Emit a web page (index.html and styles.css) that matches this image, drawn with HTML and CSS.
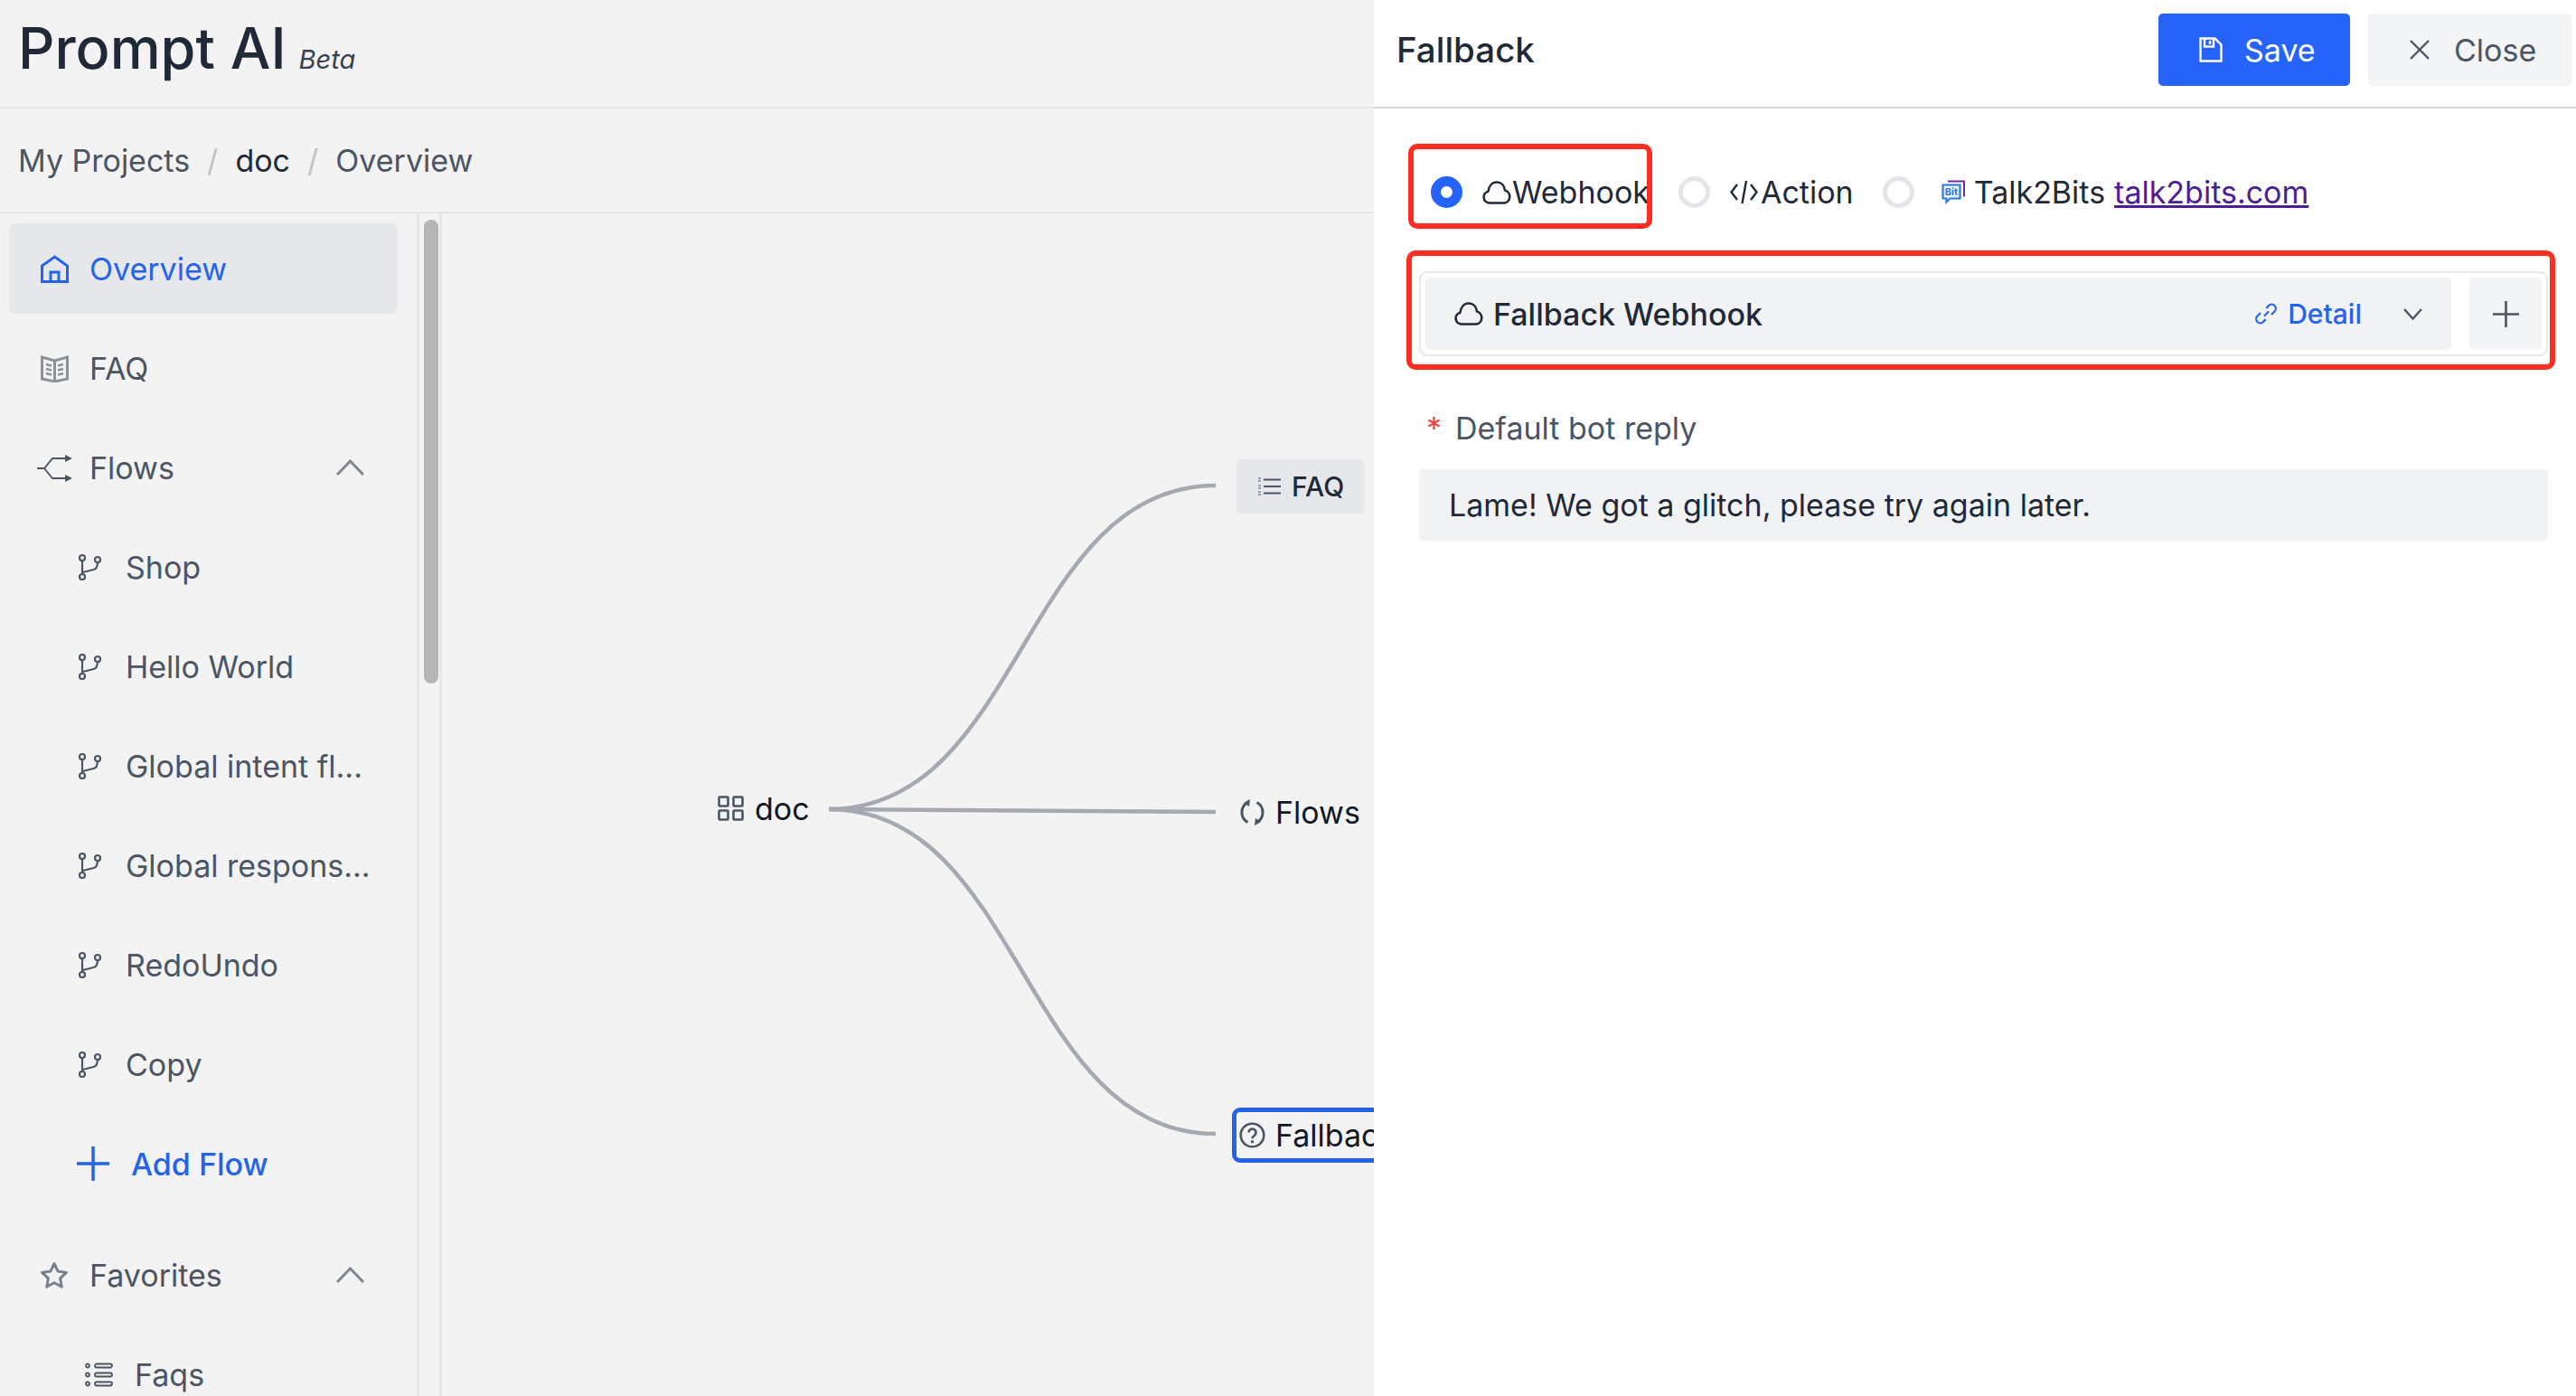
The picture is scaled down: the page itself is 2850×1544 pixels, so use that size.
FILE: index.html
```html
<!DOCTYPE html>
<html lang="en">
<head>
  <meta charset="UTF-8" />
  <title>Prompt AI</title>
  <link rel="stylesheet" href="styles.css">
</head>
<body>
  <svg class="icon-defs" width="0" height="0">
    <symbol id="i-branch" viewBox="0 0 25 29">
      <g fill="none" stroke="currentColor" stroke-width="2.2">
        <circle cx="4" cy="4" r="3" />
        <circle cx="4" cy="25" r="3" />
        <circle cx="21" cy="6" r="3" />
        <path d="M4 7v15M4.500 20l12-3c3-1 4-2 4.500-8" />
      </g>
    </symbol>
    <symbol id="i-chevron-up" viewBox="0 0 31 18">
      <path d="M1 17L15.500 2 30 17" fill="none" stroke="currentColor" stroke-width="3" />
    </symbol>
    <symbol id="i-cloud" viewBox="0 0 32 26">
      <path d="M8 24.500a6.500 6.500 0 0 1-1.500-12.800C7.200 5.500 11 1.500 16 1.500s8.500 3.800 9 9a7.200 7.200 0 0 1-.5 14z" fill="none" stroke="currentColor" stroke-width="2.600" stroke-linejoin="round" />
    </symbol>
  </svg>

  <div class="app">
    <div class="main">
      <header class="top-bar">
        <span class="logo">Prompt AI</span>
        <span class="beta">Beta</span>
      </header>
      <nav class="crumbs">
        <span>My Projects</span>
        <span class="crumb-sep">/</span>
        <span class="crumb-dark">doc</span>
        <span class="crumb-sep">/</span>
        <span>Overview</span>
      </nav>

      <div class="content">
        <aside class="sidebar">
          <ul class="nav">
            <li class="nav-item active">
              <span class="slot">
                <svg class="ic-home" viewBox="0 0 31 31"><path d="M1.500 29.500V12L15.500 2l14 10v17.500zM11 29.500V19h9v10.500" fill="none" stroke="currentColor" stroke-width="3" /></svg>
              </span>
              Overview
            </li>
            <li class="nav-item">
              <span class="slot">
                <svg class="ic-book" viewBox="0 0 31 31"><path d="M1.500 3l14 4 14-4v24l-14 3-14-3zM15.500 7v23" fill="none" stroke="#8b929c" stroke-width="3" /><path d="M6 11l6 1.500M6 16l6 1.500M6 21l6 1.500M25 11l-6 1.500M25 16l-6 1.500M25 21l-6 1.500" stroke="#8b929c" stroke-width="2.500" /></svg>
              </span>
              FAQ
            </li>
            <li class="nav-item">
              <span class="slot">
                <svg class="ic-flows" viewBox="0 0 39 31"><path d="M0 16h8L17 5h15M8 16l9 11h15" fill="none" stroke="currentColor" stroke-width="1.800" /><path d="M31 1l8 4-8 4zM31 23l8 4-8 4z" fill="currentColor" /></svg>
              </span>
              Flows
              <svg class="chevron"><use href="#i-chevron-up" /></svg>
            </li>
            <li class="nav-item sub"><svg class="ic-branch"><use href="#i-branch" /></svg>Shop</li>
            <li class="nav-item sub"><svg class="ic-branch"><use href="#i-branch" /></svg>Hello World</li>
            <li class="nav-item sub"><svg class="ic-branch"><use href="#i-branch" /></svg>Global intent fl...</li>
            <li class="nav-item sub"><svg class="ic-branch"><use href="#i-branch" /></svg>Global respons...</li>
            <li class="nav-item sub"><svg class="ic-branch"><use href="#i-branch" /></svg>RedoUndo</li>
            <li class="nav-item sub"><svg class="ic-branch"><use href="#i-branch" /></svg>Copy</li>
            <li class="nav-item add-flow">
              <svg class="ic-plus" viewBox="0 0 36 38"><path d="M18 0v38M0 19h36" stroke="currentColor" stroke-width="3.500" /></svg>
              Add Flow
            </li>
            <li class="nav-item favorites">
              <span class="slot">
                <svg class="ic-star" viewBox="0 0 32 31"><path d="M16 2.500l4.100 8.600 9.400 1.300-6.900 6.500 1.700 9.400L16 23.800l-8.300 4.500 1.700-9.400-6.900-6.500 9.400-1.300z" fill="none" stroke="#79818c" stroke-width="3" stroke-linejoin="round" /></svg>
              </span>
              Favorites
              <svg class="chevron"><use href="#i-chevron-up" /></svg>
            </li>
            <li class="nav-item faqs">
              <svg class="ic-faqs" viewBox="0 0 31 27">
                <g fill="none" stroke="currentColor" stroke-width="1.800">
                  <circle cx="3" cy="3.500" r="2" /><circle cx="3" cy="13.500" r="2" /><circle cx="3" cy="23.500" r="2" />
                  <rect x="11" y="1.500" width="19" height="4" rx="2" /><rect x="11" y="11.500" width="19" height="4" rx="2" /><rect x="11" y="21.500" width="19" height="4" rx="2" />
                </g>
              </svg>
              Faqs
            </li>
          </ul>
        </aside>
        <div class="rail"><div class="thumb"></div></div>

        <section class="canvas">
          <svg class="links" width="1031" height="1308">
            <g fill="none" stroke="#a5a9b1" stroke-width="4.500">
              <path d="M428 659C642 659 642 301 856 301" />
              <path d="M428 659L856 662" />
              <path d="M428 659C642 659 642 1018 856 1018" />
            </g>
          </svg>

          <div class="node node-doc">
            <svg class="ic-node-doc" viewBox="0 0 29 28"><g fill="none" stroke="#4b5563" stroke-width="2.600"><rect x="1.500" y="1.500" width="10" height="10" rx="1" /><rect x="17.500" y="1.500" width="10" height="10" rx="1" /><rect x="1.500" y="16.500" width="10" height="10" rx="1" /><rect x="17.500" y="16.500" width="10" height="10" rx="1" /></g></svg>
            doc
          </div>
          <div class="node node-faq">
            <svg class="ic-node-list" viewBox="0 0 25 20"><path d="M6 2.500h19M6 10h19M6 17.500h19" stroke="#4b5563" stroke-width="2.200" /><path d="M0 1h3M0 4h3M0 9h3M0 12h3M0 16h3M0 19h3" stroke="#4b5563" stroke-width="1.200" /></svg>
            FAQ
          </div>
          <div class="node node-flows">
            <svg class="ic-node" viewBox="0 0 29 29"><path d="M9.500 3.500A12.500 12.500 0 0 0 9.500 25.500M19.500 3.500A12.500 12.500 0 0 1 19.500 25.500" fill="none" stroke="#4b5563" stroke-width="3" /><path d="M12 0l-1 8-6-4zM17 29l1-8 6 4z" fill="#4b5563" /></svg>
            Flows
          </div>
          <div class="node node-fallback">
            <svg class="ic-node" viewBox="0 0 29 29"><circle cx="14.500" cy="14.500" r="12.800" fill="none" stroke="#4b5563" stroke-width="2.600" /><path d="M10.500 11.500a4 4 0 1 1 6.500 3.200c-1.600 1.100-2.500 1.800-2.500 3.500" fill="none" stroke="#4b5563" stroke-width="2.600" /><circle cx="14.500" cy="21.800" r="1.700" fill="#4b5563" /></svg>
            Fallback
          </div>
        </section>
      </div>
    </div>

    <div class="drawer">
      <header class="drawer-head">
        <h2>Fallback</h2>
        <button class="btn btn-save">
          <svg class="ic-save" viewBox="0 0 26 28"><path d="M1.500 1.500h16l7 7v18h-23zM6 1.500v9h10v-9M12 4v4" fill="none" stroke="#fff" stroke-width="2.400" /></svg>
          Save
        </button>
        <button class="btn btn-close">
          <svg class="ic-close" viewBox="0 0 22 22"><path d="M1 1l20 20M21 1L1 21" stroke="#4b5563" stroke-width="2.400" /></svg>
          Close
        </button>
      </header>

      <div class="drawer-body">
        <div class="radios">
          <label class="radio">
            <span class="dot checked"></span>
            <svg class="ic-cloud"><use href="#i-cloud" /></svg>Webhook
          </label>
          <label class="radio radio-action">
            <span class="dot"></span>
            <svg class="ic-code" viewBox="0 0 31 27"><path d="M8 5L1.500 13.500 8 22M23 5l6.500 8.500L23 22M18 1l-4.500 25" fill="none" stroke="#1f2937" stroke-width="2.400" /></svg>Action
          </label>
          <label class="radio radio-talk">
            <span class="dot"></span>
            <svg class="ic-bit" viewBox="0 0 27 27">
              <path d="M7 1.500h18v17" fill="none" stroke="#6d28a8" stroke-width="2" />
              <path d="M1.500 5.500h19v15h-11l-4 4v-4h-4z" fill="#eaf3fc" stroke="#2a7ad8" stroke-width="2.200" />
              <text x="11" y="16.500" class="bit-label">Bit</text>
            </svg>
            Talk2Bits <a class="talk-link" href="#">talk2bits.com</a>
          </label>
        </div>

        <div class="picker">
          <div class="select">
            <svg class="ic-cloud-sm"><use href="#i-cloud" /></svg>
            <span class="select-name">Fallback Webhook</span>
            <span class="detail">
              <svg class="ic-link" viewBox="0 0 24 24"><path d="M10 14.500l5-5M12.500 6l2.500-3a4.500 4.500 0 0 1 6.500 6.500L18 13M11.500 18l-2.500 3a4.500 4.500 0 0 1-6.500-6.500L6 11" fill="none" stroke="#2563eb" stroke-width="2.200" /></svg>
              Detail
            </span>
            <svg class="ic-caret" viewBox="0 0 21 13"><path d="M1 1l9.500 10.500L20 1" fill="none" stroke="#4b5563" stroke-width="2.400" /></svg>
          </div>
          <div class="picker-add">
            <svg class="ic-add" viewBox="0 0 29 29"><path d="M14.500 0v29M0 14.500h29" stroke="#4b5563" stroke-width="2.600" /></svg>
          </div>
        </div>

        <div class="field-label"><span class="req">*</span>Default bot reply</div>
        <div class="text-input">Lame! We got a glitch, please try again later.</div>

        <div class="mark mark-radio"></div>
        <div class="mark mark-picker"></div>
      </div>
    </div>
  </div>
</body>
</html>
```

FILE: styles.css
```css
* {
  box-sizing: border-box;
}
html, body {
  margin: 0;
  height: 100%;
  overflow: hidden;
}
body {
  font-family: Inter, "Liberation Sans", sans-serif;
  font-size: 34px;
  color: #1f2937;
  background: #f3f3f3;
}
.icon-defs {
  position: absolute;
}
svg {
  display: block;
  flex: none;
}
.app {
  display: flex;
  height: 1544px;
}

/* left side */
.main {
  width: 1520px;
  height: 100%;
  display: flex;
  flex-direction: column;
  overflow: hidden;
  background: #f3f3f3;
}
.top-bar {
  height: 120px;
  flex: none;
  display: flex;
  align-items: baseline;
  gap: 14px;
  padding: 15px 20px 0;
  border-bottom: 2px solid #e8e8e8;
}
.logo {
  font-size: 63px;
  font-weight: 500;
  color: #1f2937;
}
.beta {
  font-size: 29px;
  font-style: italic;
  color: #374151;
}
.crumbs {
  height: 116px;
  flex: none;
  display: flex;
  align-items: center;
  gap: 19px;
  padding: 0 20px;
  color: #4b5563;
  border-bottom: 2px solid #e8e8e8;
}
.crumb-sep {
  color: #c0c3c8;
}
.crumb-dark {
  color: #1f2937;
}
.content {
  flex: 1;
  display: flex;
  min-height: 0;
}

/* sidebar */
.sidebar {
  width: 461px;
  flex: none;
  overflow: hidden;
}
.nav {
  list-style: none;
  margin: 0;
  padding: 11px 21px 0 10px;
  display: flex;
  flex-direction: column;
  gap: 10px;
}
.nav-item {
  height: 100px;
  flex: none;
  display: flex;
  align-items: center;
  padding-left: 30px;
  color: #4b5563;
  border-radius: 8px;
}
.nav-item.active {
  background: #e5e7ea;
  color: #2563eb;
}
.slot {
  width: 40px;
  margin-right: 19px;
  display: flex;
  justify-content: center;
}
.ic-home,
.ic-book {
  width: 31px;
  height: 31px;
}
.ic-flows {
  width: 39px;
  height: 31px;
}
.ic-star {
  width: 32px;
  height: 31px;
}
.chevron {
  width: 31px;
  height: 18px;
  margin-left: auto;
  margin-right: 37px;
  color: #7f8791;
}
.nav-item.sub {
  padding-left: 77px;
}
.ic-branch {
  width: 25px;
  height: 29px;
  margin-right: 27px;
}
.nav-item.add-flow {
  padding-left: 75px;
  color: #2563eb;
  font-weight: 500;
}
.ic-plus {
  width: 36px;
  height: 38px;
  margin-right: 24px;
}
.nav-item.favorites {
  margin-top: 13px;
}
.nav-item.faqs {
  padding-left: 84px;
}
.ic-faqs {
  width: 31px;
  height: 27px;
  margin-right: 24px;
}
.rail {
  width: 28px;
  flex: none;
  padding: 7px 5px 0;
  border-left: 3px solid #e6e6e6;
  border-right: 3px solid #e6e6e6;
}
.thumb {
  height: 513px;
  width: 16px;
  background: #b5b5b5;
  border-radius: 8px;
}

/* flow diagram */
.canvas {
  flex: 1;
  position: relative;
  overflow: hidden;
}
.links {
  position: absolute;
  left: 0;
  top: 0;
}
.node {
  position: absolute;
  display: flex;
  align-items: center;
  white-space: nowrap;
  color: #111827;
}
.node-doc {
  left: 305px;
  top: 628px;
  height: 60px;
  gap: 12px;
}
.ic-node-doc {
  width: 29px;
  height: 28px;
}
.node-faq {
  left: 879px;
  top: 272px;
  width: 142px;
  height: 60px;
  padding-left: 24px;
  gap: 12px;
  background: #e5e7ea;
  border-radius: 6px;
  font-size: 30px;
  font-weight: 500;
  color: #1f2937;
}
.ic-node-list {
  width: 25px;
  height: 20px;
}
.node-flows {
  left: 882px;
  top: 632px;
  height: 60px;
  gap: 11px;
}
.ic-node {
  width: 29px;
  height: 29px;
}
.node-fallback {
  left: 874px;
  top: 989px;
  width: 300px;
  height: 61px;
  padding-left: 3px;
  gap: 11px;
  border: 5px solid #2563eb;
  border-radius: 9px;
}

/* drawer */
.drawer {
  flex: 1;
  height: 100%;
  background: #fff;
}
.drawer-head {
  height: 120px;
  display: flex;
  align-items: flex-start;
  padding: 15px 5px 0 25px;
  border-bottom: 2px solid #d4d4d4;
}
.drawer-head h2 {
  margin: 0 auto 0 0;
  font-size: 38.500px;
  font-weight: 500;
  line-height: 80px;
  color: #1f2937;
}
.btn {
  height: 80px;
  border: none;
  border-radius: 5px;
  display: flex;
  align-items: center;
  font: inherit;
}
.btn-save {
  width: 212px;
  padding-left: 45px;
  gap: 24px;
  background: #2563fb;
  color: #fff;
}
.ic-save {
  width: 26px;
  height: 28px;
}
.btn-close {
  width: 225px;
  margin-left: 20px;
  padding-left: 46px;
  gap: 27px;
  background: #f3f4f6;
  color: #4b5563;
}
.ic-close {
  width: 22px;
  height: 22px;
}
.drawer-body {
  position: relative;
  padding: 75px 31px 0 50px;
}
.radios {
  height: 105px;
  display: flex;
  align-items: flex-start;
  line-height: 35px;
  color: #1f2937;
}
.radio {
  display: flex;
  align-items: center;
  height: 35px;
  margin-left: 13px;
}
.radio-action {
  margin-left: 32px;
}
.radio-talk {
  margin-left: 32px;
}
.dot {
  width: 35px;
  height: 35px;
  border-radius: 50%;
  border: 5px solid #e3e5e9;
  margin-right: 22px;
  flex: none;
}
.dot.checked {
  border: 11px solid #2563fb;
  background: #fff;
}
.ic-cloud {
  width: 32px;
  height: 26px;
  margin-right: 1px;
}
.ic-code {
  width: 31px;
  height: 27px;
  margin-right: 3px;
}
.ic-bit {
  width: 27px;
  height: 27px;
  margin: 0 9px 0 8px;
}
.bit-label {
  font-size: 11px;
  font-weight: 700;
  fill: #2a7ad8;
  text-anchor: middle;
}
.talk-link {
  margin-left: 10px;
  color: #4c1d95;
}
.picker {
  height: 94px;
  display: flex;
  justify-content: space-between;
  padding: 5px 5px;
  border: 2px solid #e5e7eb;
  border-radius: 9px;
}
.select {
  width: 1135px;
  display: flex;
  align-items: center;
  padding-left: 32px;
  background: #f1f2f4;
  border-radius: 5px;
}
.ic-cloud-sm {
  width: 32px;
  height: 26px;
  margin-right: 11px;
}
.select-name {
  font-weight: 500;
  margin-right: auto;
}
.detail {
  display: flex;
  align-items: center;
  gap: 12px;
  font-size: 30px;
  font-weight: 500;
  color: #2563eb;
}
.ic-link {
  width: 24px;
  height: 24px;
}
.ic-caret {
  width: 21px;
  height: 13px;
  margin: 0 32px 0 46px;
}
.picker-add {
  width: 80px;
  display: flex;
  align-items: center;
  justify-content: center;
  background: #f3f4f6;
  border-radius: 5px;
}
.ic-add {
  width: 29px;
  height: 29px;
}
.field-label {
  margin-top: 56px;
  height: 46px;
  display: flex;
  align-items: center;
  padding-left: 8px;
  color: #4b5563;
}
.req {
  width: 32px;
  color: #ef4444;
}
.text-input {
  margin-top: 23px;
  height: 79px;
  display: flex;
  align-items: center;
  padding-left: 33px;
  background: #f1f2f4;
  border-radius: 5px;
  color: #1f2937;
}

/* red annotation boxes drawn over the form */
.mark {
  position: absolute;
  border: 6px solid #fb2e20;
  border-radius: 10px;
}
.mark-radio {
  left: 38px;
  top: 39px;
  width: 270px;
  height: 94px;
}
.mark-picker {
  left: 36px;
  top: 157px;
  width: 1271px;
  height: 132px;
}
```
